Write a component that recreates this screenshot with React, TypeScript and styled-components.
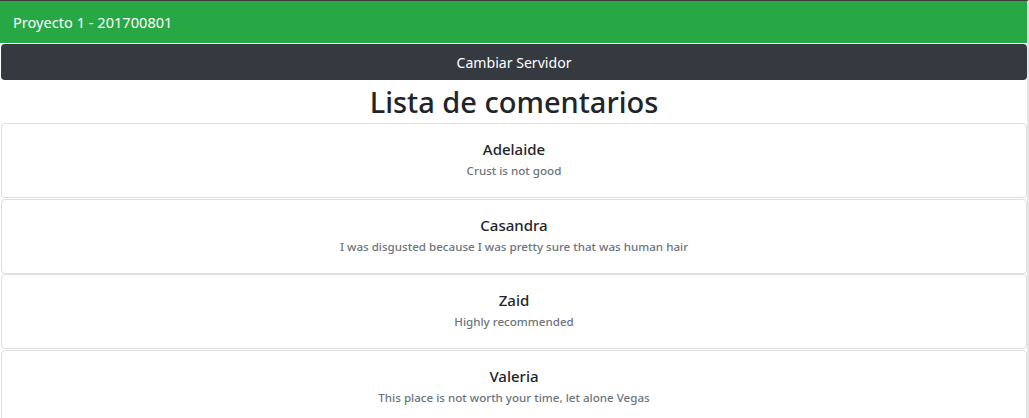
import styled, { createGlobalStyle } from "styled-components";

const comments = [
   { name: "Adelaide", text: "Crust is not good" },
   { name: "Casandra", text: "I was disgusted because I was pretty sure that was human hair" },
   { name: "Zaid", text: "Highly recommended" },
   { name: "Valeria", text: "This place is not worth your time, let alone Vegas" },
];

const GlobalStyle = createGlobalStyle`
   html, body {
      margin: 0;
      padding: 0;
      background: #fff;
      overflow: hidden;
   }
   body {
      font-family: "Noto Sans", "Open Sans", sans-serif;
      color: #212529;
   }
`;

function App() {
   return (
      <>
         <GlobalStyle />
         <Page>
            <Navbar>
               <span className="brand">Proyecto 1 - 201700801</span>
            </Navbar>
            <Content>
               <ServerButton type="button">Cambiar Servidor</ServerButton>
               <Title>Lista de comentarios</Title>
               <CommentList>
                  {comments.map((c) => (
                     <CommentCard key={c.name}>
                        <CardTitle>{c.name}</CardTitle>
                        <CardSubtitle>{c.text}</CardSubtitle>
                     </CommentCard>
                  ))}
               </CommentList>
            </Content>
         </Page>
      </>
   );
}

export default App;

const Page = styled.div`
   width: 1029px;
   min-height: 418px;
   box-sizing: border-box;
   border-top: 1px solid #3c3c3c;
   border-right: 2px solid #e4e4e4;
`;

const Navbar = styled.nav`
   height: 42px;
   background-color: #28a745;
   display: flex;
   align-items: center;
   padding: 0 13px;

   .brand {
      color: #fff;
      font-size: 14.6px;
   }
`;

const Content = styled.div`
   padding: 1px 0 0 1px;
`;

const ServerButton = styled.button`
   display: block;
   width: 100%;
   height: 36px;
   border: none;
   border-radius: 4px;
   background-color: #343a40;
   color: #fff;
   font-family: inherit;
   font-size: 14.1px;
   cursor: pointer;
`;

const Title = styled.h1`
   margin: 0;
   height: 43px;
   line-height: 43px;
   text-align: center;
   font-size: 29px;
   font-weight: 500;
`;

const CommentList = styled.ul`
   list-style: none;
   margin: 0;
   padding: 0;
   display: flex;
   flex-direction: column;
   gap: 0.7px;
`;

const CommentCard = styled.li`
   height: 75px;
   box-sizing: border-box;
   border: 1px solid #dedede;
   border-radius: 4px;
   padding-top: 15px;
   text-align: center;
`;

const CardTitle = styled.h5`
   margin: 0 0 3px;
   font-size: 15px;
   line-height: 20px;
   font-weight: 500;
`;

const CardSubtitle = styled.h6`
   margin: 0;
   font-size: 11.6px;
   line-height: 18px;
   font-weight: 500;
   color: #6c757d;
`;
